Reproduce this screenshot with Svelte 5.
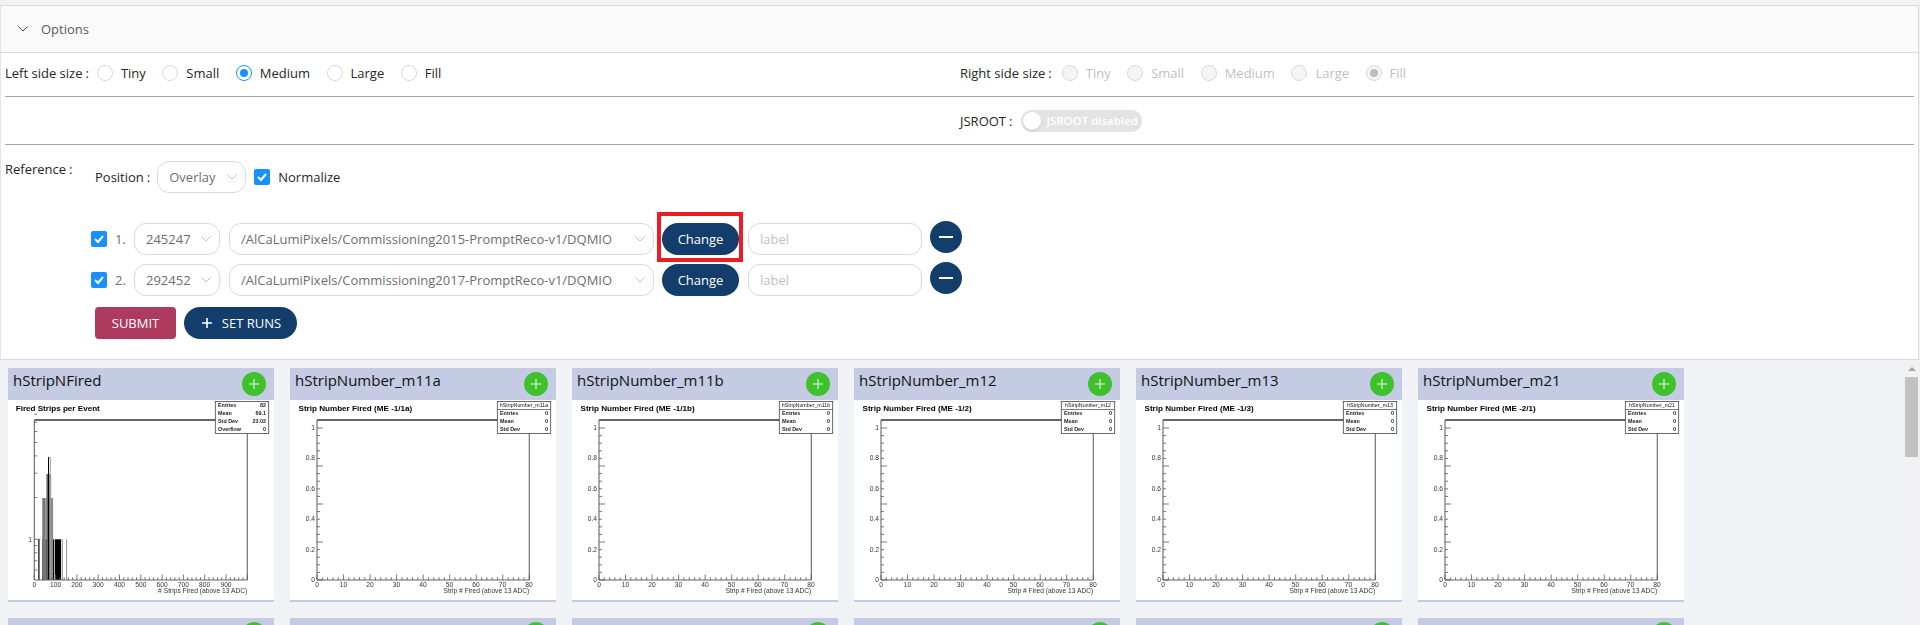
<script>
  const sizes = ['Tiny', 'Small', 'Medium', 'Large', 'Fill'];

  const runs = [
    { n: 1, run: '245247', dataset: '/AlCaLumiPixels/Commissioning2015-PromptReco-v1/DQMIO', marked: true },
    { n: 2, run: '292452', dataset: '/AlCaLumiPixels/Commissioning2017-PromptReco-v1/DQMIO', marked: false }
  ];

  const stripNumber = (name, title) => ({
    name,
    title,
    stats: [['Entries', '0'], ['Mean', '0'], ['Std Dev', '0']],
    header: name
  });

  const plots = [
    {
      name: 'hStripNFired',
      title: 'Fired Strips per Event',
      stats: [['Entries', '82'], ['Mean', '69.1'], ['Std Dev', '23.02'], ['Overflow', '0']],
      log: true
    },
    stripNumber('hStripNumber_m11a', 'Strip Number Fired (ME -1/1a)'),
    stripNumber('hStripNumber_m11b', 'Strip Number Fired (ME -1/1b)'),
    stripNumber('hStripNumber_m12', 'Strip Number Fired (ME -1/2)'),
    stripNumber('hStripNumber_m13', 'Strip Number Fired (ME -1/3)'),
    stripNumber('hStripNumber_m21', 'Strip Number Fired (ME -2/1)')
  ];

  // next row, only the tops of the headers show
  const nextRow = ['hStripNumber_m22', 'hStripNumber_m31', 'hStripNumber_m32', 'hStripNumber_m41', 'hStripNumber_m42', 'hStripNumber_p11a'];

  const right = 239.3;
  const bottom = 180;
  const top = 20;

  // linear y axis, 0 to 1
  const yTicks = [];
  for (let i = 0; i <= 20; i++) {
    yTicks.push({ y: bottom - i * 7.6, major: i % 5 === 0 });
  }
  const yLabels = ['0', '0.2', '0.4', '0.6', '0.8', '1'];

  // log y axis of the first plot
  const logY = (v) => 139.3 - 138.5 * Math.log10(v);
  const logTicks = [0.6, 0.7, 0.8, 0.9, 1, 2, 3, 4, 5, 6, 7, 8].map((v) => ({ y: logY(v), major: v === 1 }));

  function xTicks(left, count, minor) {
    const step = (right - left) / (count * minor);
    const out = [];
    for (let i = 0; i <= count * minor; i++) {
      out.push({ x: left + i * step, major: i % minor === 0 });
    }
    return out;
  }

  const linearTicks = xTicks(27, 8, 5);
  const hundredTicks = xTicks(26.3, 10, 5);

  const bars = [
    // count 1
    { x: 30.3, w: 1.2, y: 139.3, c: '#000' },
    { x: 34.3, w: 1.9, y: 139.3, c: '#000' },
    { x: 36.2, w: 2.5, y: 139.3, c: '#9c6259' },
    { x: 38.7, w: 1.8, y: 139.3, c: '#000' },
    { x: 40.5, w: 1, y: 139.3, c: '#333' },
    { x: 41.5, w: 2.3, y: 139.3, c: '#c48a80' },
    { x: 44.2, w: 2.1, y: 139.3, c: '#000' },
    { x: 47, w: 6, y: 139.3, c: '#000' },
    { x: 53.7, w: 1, y: 139.3, c: '#888' },
    { x: 58.3, w: 0.8, y: 139.3, c: '#777' },
    // count 2
    { x: 34.3, w: 3.4, y: 98, c: '#777' },
    { x: 38.7, w: 1.8, y: 98, c: '#222' },
    { x: 40.5, w: 2.2, y: 98, c: '#8c5a52' },
    { x: 42.7, w: 2.4, y: 98, c: '#888' },
    // count 3
    { x: 38.4, w: 2, y: 74, c: '#666' },
    { x: 40.4, w: 1.2, y: 74, c: '#333' },
    { x: 41.6, w: 1.6, y: 74, c: '#aaa' },
    // count 4
    { x: 40, w: 1, y: 57, c: '#000' },
    { x: 41.8, w: 1, y: 57, c: '#999' }
  ];
</script>

{#snippet chevron()}
  <svg class="chevron" viewBox="0 0 10 6" width="10" height="6">
    <polyline points="0.5,0.5 5,5 9.5,0.5" />
  </svg>
{/snippet}

{#snippet tick()}
  <svg viewBox="0 0 16 16" width="16" height="16">
    <polyline class="tick" points="4,8 7,11 12,5" />
  </svg>
{/snippet}

{#snippet sizeRadios(selected, disabled)}
  {#each sizes as size}
    <span class="radio-item" class:disabled>
      <span class="radio" class:checked={size === selected}></span>
      <span>{size}</span>
    </span>
  {/each}
{/snippet}

{#snippet histogram(p)}
  <svg class="histo" viewBox="0 0 266 200" width="266" height="200">
    <text class="plot-title" x={p.log ? 7.7 : 8.5} y="10.5">{p.title}</text>

    {#if p.log}
      {#each bars as b}
        <rect x={b.x} y={b.y} width={b.w} height={bottom - b.y} fill={b.c} />
      {/each}
    {/if}

    <!-- frame -->
    <line class="frame-top" x1={p.log ? 26.3 : 27} x2={right} y1={top} y2={top} />
    <line class="frame" x1={p.log ? 26.3 : 27} x2={p.log ? 26.3 : 27} y1={top} y2={bottom} />
    <line class="frame" x1={right} x2={right} y1={top} y2={bottom} />
    <line class="frame" x1={p.log ? 26.3 : 27} x2={right} y1={bottom} y2={bottom} />

    <!-- y axis -->
    {#if p.log}
      {#each logTicks as t}
        <line class="axis-tick" x1="26.3" x2={26.3 + (t.major ? 6 : 3)} y1={t.y} y2={t.y} />
      {/each}
      <text class="tick-label" x="24" y="141.5" text-anchor="end">1</text>
    {:else}
      {#each yTicks as t}
        <line class="axis-tick" x1="27" x2={27 + (t.major ? 6 : 3)} y1={t.y} y2={t.y} />
      {/each}
      {#each yLabels as label, i}
        <text class="tick-label" x="25" y={bottom - i * 30.4 + 2} text-anchor="end">{label}</text>
      {/each}
    {/if}

    <!-- x axis -->
    {#each p.log ? hundredTicks : linearTicks as t}
      <line class="axis-tick" x1={t.x} x2={t.x} y1={bottom} y2={bottom - (t.major ? 5.5 : 2.8)} />
    {/each}
    {#if p.log}
      {#each [0, 100, 200, 300, 400, 500, 600, 700, 800, 900] as v, i}
        <text class="tick-label" x={26.3 + i * 21.3} y="187" text-anchor="middle">{v}</text>
      {/each}
      <text class="tick-label" x={right} y="193" text-anchor="end">&#35; Strips Fired (above 13 ADC)</text>
    {:else}
      {#each [0, 10, 20, 30, 40, 50, 60, 70, 80] as v, i}
        <text class="tick-label" x={27 + i * 26.5} y="187" text-anchor="middle">{v}</text>
      {/each}
      <text class="tick-label" x={right} y="193" text-anchor="end">Strip &#35; Fired (above 13 ADC)</text>
    {/if}

    <!-- stats box -->
    <rect class="stats" x="207.3" y="1.5" width="53.4" height="32" />
    {#if p.header}
      <line class="stats-line" x1="207.3" x2="260.7" y1="9.5" y2="9.5" />
      <text class="stats-name" x="234" y="7" text-anchor="middle">{p.header}</text>
    {/if}
    {#each p.stats as [label, value], i}
      {@const y = (p.header ? 15.2 : 7.2) + i * 8}
      <text class="stats-text" x="210" {y}>{label}</text>
      <text class="stats-text" x="258" {y} text-anchor="end">{value}</text>
    {/each}
  </svg>
{/snippet}

{#snippet plotHead(name)}
  <div class="plot-head">
    <span class="plot-name">{name}</span>
    <button class="add" aria-label="add">
      <svg viewBox="0 0 12 12" width="12" height="12"><path d="M6 1v10M1 6h10" /></svg>
    </button>
  </div>
{/snippet}

<div class="page">
  <section class="panel">
    <header class="panel-head">
      {@render chevron()}
      <span>Options</span>
    </header>

    <div class="size-row">
      <div class="size-col">
        <span class="label">Left side size<i>:</i></span>
        {@render sizeRadios('Medium', false)}
      </div>
      <div class="size-col">
        <span class="label">Right side size<i>:</i></span>
        {@render sizeRadios('Fill', true)}
      </div>
    </div>

    <hr />

    <div class="jsroot-row">
      <span class="label">JSROOT<i>:</i></span>
      <span class="switch">
        <span class="knob"></span>
        <span class="switch-text">JSROOT disabled</span>
      </span>
    </div>

    <hr />

    <div class="reference">
      <span class="ref-label label">Reference<i>:</i></span>
      <div class="ref-content">
        <div class="position-row">
          <span class="label">Position<i>:</i></span>
          <span class="select overlay">Overlay {@render chevron()}</span>
          <span class="checkbox">{@render tick()}</span>
          <span>Normalize</span>
        </div>

        {#each runs as r}
          <div class="run-row">
            <span class="checkbox">{@render tick()}</span>
            <span class="run-num">{r.n}.</span>
            <span class="select run">{r.run} {@render chevron()}</span>
            <span class="select dataset">{r.dataset} {@render chevron()}</span>
            <span class="change-wrap" class:marked={r.marked}>
              <button class="pill change">Change</button>
            </span>
            <input class="label-input" placeholder="label" />
            <button class="minus" aria-label="remove"><span></span></button>
          </div>
        {/each}

        <div class="actions">
          <button class="submit">SUBMIT</button>
          <button class="pill set-runs">
            <svg viewBox="0 0 10 10" width="10" height="10"><path d="M5 0v10M0 5h10" /></svg>
            SET RUNS
          </button>
        </div>
      </div>
    </div>
  </section>

  <div class="lower">
    <div class="plots">
      {#each plots as p}
        <article class="plot">
          {@render plotHead(p.name)}
          {@render histogram(p)}
        </article>
      {/each}
      {#each nextRow as name}
        <article class="plot">
          {@render plotHead(name)}
        </article>
      {/each}
    </div>

    <div class="scrollbar">
      <span class="arrow"></span>
      <span class="thumb"></span>
    </div>
  </div>
</div>

<style>
  :global(body) {
    margin: 0;
    background: #f0f2f5;
  }

  .page {
    width: 1920px;
    height: 625px;
    overflow: hidden;
    padding-top: 5px;
    box-sizing: border-box;
    font-family: "Open Sans", "Noto Sans", sans-serif;
    font-size: 13px;
    color: #262626;
  }

  .panel {
    width: 1919px;
    height: 355px;
    box-sizing: border-box;
    background: #fff;
    border: 1px solid #d9d9d9;
    border-left: 1px solid #e4e4e4;
  }

  .panel-head {
    height: 47px;
    box-sizing: border-box;
    background: #fafafa;
    border-bottom: 1px solid #d9d9d9;
    display: flex;
    align-items: center;
    padding-left: 17px;
    gap: 13px;
    color: #595959;
  }

  .panel-head .chevron polyline {
    stroke: #444;
  }

  .chevron polyline {
    fill: none;
    stroke: #bfbfbf;
    stroke-width: 1;
  }

  .size-row {
    height: 43px;
    padding-bottom: 3px;
    box-sizing: border-box;
    display: grid;
    grid-template-columns: 959px 1fr;
  }

  .size-col {
    display: flex;
    align-items: center;
    padding-left: 4px;
    gap: 8px;
  }

  .size-col + .size-col {
    padding-left: 0;
  }

  .size-col + .size-col .label {
    margin-right: 2px;
  }

  .label {
    white-space: nowrap;
  }

  .label i {
    font-style: normal;
    margin-left: 3px;
  }

  .radio-item {
    display: inline-flex;
    align-items: center;
    gap: 8px;
    margin-right: 8.5px;
  }

  .radio-item.disabled {
    color: #bfbfbf;
  }

  .radio {
    width: 16px;
    height: 16px;
    box-sizing: border-box;
    border: 1px solid #d9d9d9;
    border-radius: 50%;
    display: inline-flex;
    align-items: center;
    justify-content: center;
  }

  .radio.checked {
    border-color: #1890ff;
  }

  .radio.checked::after {
    content: '';
    width: 8px;
    height: 8px;
    border-radius: 50%;
    background: #1890ff;
  }

  .disabled .radio {
    background: #f5f5f5;
    border-color: #d9d9d9;
  }

  .disabled .radio.checked::after {
    background: #bdbdbd;
  }

  hr {
    margin: 0 4px;
    border: 0;
    border-top: 1px solid #a6a6a6;
    height: 0;
  }

  .jsroot-row {
    height: 47px;
    padding-left: 959px;
    display: flex;
    align-items: center;
    gap: 9px;
  }

  .switch {
    width: 121px;
    height: 22px;
    border-radius: 11px;
    background: #e3e3e3;
    display: flex;
    align-items: center;
    padding-left: 2px;
    box-sizing: border-box;
    gap: 5px;
  }

  .knob {
    width: 18px;
    height: 18px;
    border-radius: 50%;
    background: #fff;
    box-shadow: 0 1px 2px rgba(0, 0, 0, 0.15);
  }

  .switch-text {
    color: #fff;
    font-size: 11.5px;
    font-weight: 600;
    white-space: nowrap;
  }

  .reference {
    display: flex;
    padding: 16px 0 0 4px;
    height: 214px;
    box-sizing: border-box;
  }

  .ref-label {
    width: 86px;
    flex: none;
    line-height: 16px;
  }

  .position-row {
    height: 32px;
    display: flex;
    align-items: center;
    padding-left: 4px;
    margin-bottom: 30px;
  }

  .select {
    height: 32px;
    box-sizing: border-box;
    border: 1px solid #d9d9d9;
    border-radius: 12px;
    display: flex;
    align-items: center;
    justify-content: space-between;
    padding: 0 8px 0 11px;
    color: #6e6e6e;
    white-space: nowrap;
  }

  .overlay {
    width: 89px;
    margin: 0 8px 0 7px;
  }

  .checkbox {
    width: 16px;
    height: 16px;
    background: #1890ff;
    border-radius: 2px;
    flex: none;
  }

  .checkbox svg {
    display: block;
  }

  .tick {
    fill: none;
    stroke: #fff;
    stroke-width: 2;
  }

  .position-row .checkbox {
    margin-right: 8px;
  }

  .run-row {
    display: flex;
    align-items: center;
    height: 32px;
    margin-bottom: 9px;
  }

  .run-num {
    width: 27px;
    padding-left: 8px;
    box-sizing: border-box;
    color: #6e6e6e;
  }

  .select.run {
    width: 86px;
  }

  .select.dataset {
    width: 425px;
    margin: 0 8px 0 9px;
  }

  .pill {
    border: 0;
    border-radius: 16px;
    background: #133d6a;
    color: #fff;
    font: inherit;
    height: 32px;
  }

  .change {
    width: 77px;
    padding: 0;
    display: block;
  }

  .change-wrap {
    position: relative;
    display: block;
  }

  .change-wrap.marked::after {
    content: '';
    position: absolute;
    left: -5px;
    right: -4px;
    top: -11px;
    bottom: -7px;
    border: 4px solid #ed1c24;
  }

  .label-input {
    width: 174px;
    height: 32px;
    box-sizing: border-box;
    margin: 0 8px 0 9px;
    border: 1px solid #d9d9d9;
    border-radius: 12px;
    padding: 0 11px;
    font: inherit;
  }

  .label-input::placeholder {
    color: #bfbfbf;
  }

  .minus {
    width: 32px;
    height: 32px;
    margin-bottom: 4px;
    padding: 0;
    border: 0;
    border-radius: 50%;
    background: #133d6a;
    display: flex;
    align-items: center;
    justify-content: center;
  }

  .minus span {
    width: 14px;
    height: 2px;
    background: #fff;
  }

  .actions {
    display: flex;
    gap: 8px;
    margin-top: 11px;
    padding-left: 4px;
  }

  .submit {
    width: 81px;
    height: 32px;
    padding: 0;
    border: 0;
    border-radius: 4px;
    background: #ae3a5f;
    color: #fff;
    font: inherit;
  }

  .set-runs {
    width: 113px;
    padding: 0 0 0 2px;
    display: flex;
    align-items: center;
    justify-content: center;
    gap: 10px;
  }

  .set-runs path {
    stroke: #fff;
    stroke-width: 1.6;
    fill: none;
  }

  .lower {
    height: 265px;
    display: flex;
    overflow: hidden;
  }

  .plots {
    flex: 1;
    display: flex;
    flex-wrap: wrap;
    align-content: flex-start;
    gap: 16px;
    padding: 8px 0 0 8px;
  }

  .scrollbar {
    width: 17px;
    background: #f1f1f3;
    display: flex;
    flex-direction: column;
    align-items: center;
  }

  .arrow {
    height: 17px;
    flex: none;
    box-sizing: border-box;
    padding-top: 7px;
  }

  .arrow::before {
    content: '';
    display: block;
    width: 0;
    height: 0;
    border-left: 4px solid transparent;
    border-right: 4px solid transparent;
    border-bottom: 4px solid #a3a3a3;
  }

  .thumb {
    width: 13px;
    height: 80px;
    background: #c1c1c1;
  }

  .plot {
    width: 266px;
    background: #fff;
    border-bottom: 2px solid #c5cbe3;
  }

  .plot-head {
    height: 32px;
    background: #c5cbe3;
    display: flex;
    justify-content: space-between;
    padding: 4px 8px 0 5px;
    box-sizing: border-box;
  }

  .plot-name {
    font-size: 15px;
    line-height: 17px;
    color: #111;
  }

  .add {
    width: 24px;
    height: 24px;
    padding: 0;
    border: 0;
    border-radius: 50%;
    background: #3fc12e;
    display: flex;
    align-items: center;
    justify-content: center;
  }

  .add path {
    stroke: #b5e8ac;
    stroke-width: 1.6;
    fill: none;
  }

  .histo {
    display: block;
    filter: blur(0.25px);
    font-family: "Liberation Sans", Arial, sans-serif;
  }

  .plot-title {
    font-size: 8.1px;
    font-weight: 700;
    fill: #000;
  }

  .frame-top {
    stroke: #666;
    stroke-width: 2;
  }

  .frame {
    stroke: #666;
    stroke-width: 1.1;
  }

  .axis-tick {
    stroke: #555;
    stroke-width: 0.8;
  }

  .tick-label {
    font-size: 6.7px;
    fill: #333;
  }

  .stats {
    fill: #fff;
    stroke: #444;
    stroke-width: 0.8;
  }

  .stats-line {
    stroke: #444;
    stroke-width: 0.7;
  }

  .stats-name {
    font-size: 5.3px;
    fill: #111;
  }

  .stats-text {
    font-size: 5.4px;
    font-weight: 700;
    fill: #222;
  }
</style>
